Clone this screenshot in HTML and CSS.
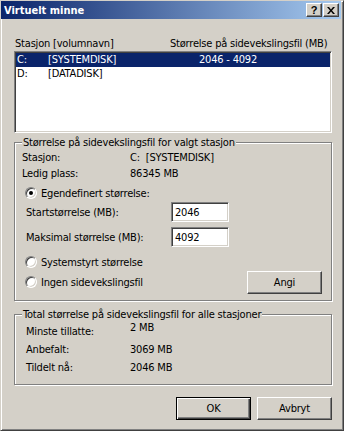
FILE: index.html
```html
<!DOCTYPE html>
<html lang="no">
<head>
  <meta charset="UTF-8" />
  <title>Virtuelt minne</title>
  <link rel="stylesheet" href="styles.css">
</head>
<body>
  <div class="vindu">
    <div class="tittellinje">
      <span class="tittel">Virtuelt minne</span>
      <div class="tittelknapper">
        <span class="tknapp hjelp">?</span>
        <span class="tknapp lukk">
          <svg width="8" height="7" viewBox="0 0 8 7"><path d="M0 0h2l2 2.5L6 0h2L5 3.5 8 7H6L4 4.5 2 7H0l3-3.5z" fill="#000"/></svg>
        </span>
      </div>
    </div>

    <div class="innhold">
      <div class="listehode">
        <span class="kol-stasjon">Stasjon [volumnavn]</span>
        <span>Størrelse på sidevekslingsfil (MB)</span>
      </div>
      <div class="liste">
        <div class="rad valgt"><span class="kol-bokstav">C:</span><span class="kol-navn">[SYSTEMDISK]</span><span>2046 - 4092</span></div>
        <div class="rad"><span class="kol-bokstav">D:</span><span class="kol-navn">[DATADISK]</span><span></span></div>
      </div>

      <div class="gruppe gruppe-valgt">
        <span class="gruppetittel">Størrelse på sidevekslingsfil for valgt stasjon</span>
        <div class="info"><span class="etikett">Stasjon:</span><span>C:&nbsp; [SYSTEMDISK]</span></div>
        <div class="info"><span class="etikett">Ledig plass:</span><span>86345 MB</span></div>
        <div class="radiovalg forste"><span class="radio valgt"></span><span>Egendefinert størrelse:</span></div>
        <div class="felt-rad"><span class="felt-etikett">Startstørrelse (MB):</span><span class="tekstfelt">2046</span></div>
        <div class="felt-rad andre"><span class="felt-etikett">Maksimal størrelse (MB):</span><span class="tekstfelt">4092</span></div>
        <div class="bunnvalg">
          <div class="radiokolonne">
            <div class="radiovalg"><span class="radio"></span><span>Systemstyrt størrelse</span></div>
            <div class="radiovalg"><span class="radio"></span><span>Ingen sidevekslingsfil</span></div>
          </div>
          <span class="knapp angi">Angi</span>
        </div>
      </div>

      <div class="gruppe gruppe-total">
        <span class="gruppetittel">Total størrelse på sidevekslingsfil for alle stasjoner</span>
        <div class="total"><span class="etikett">Minste tillatte:</span><span class="hevet">2 MB</span></div>
        <div class="total"><span class="etikett">Anbefalt:</span><span>3069 MB</span></div>
        <div class="total"><span class="etikett">Tildelt nå:</span><span>2046 MB</span></div>
      </div>

      <div class="knapperad">
        <span class="knapp standard">OK</span>
        <span class="knapp">Avbryt</span>
      </div>
    </div>
  </div>
</body>
</html>
```

FILE: styles.css
```css
* { box-sizing: border-box; }
body {
  margin: 0; background: #d4d0c8; white-space: nowrap;
  font-family: "DejaVu Sans Condensed", "DejaVu Sans", sans-serif; font-stretch: condensed;
  font-size: 11px; letter-spacing: -0.2px; color: #000;
}
.vindu {
  width: 344px; height: 431px; background: #d4d0c8;
  border: 1px solid; border-color: #d4d0c8 #404040 #404040 #d4d0c8;
  box-shadow: inset 1px 1px #fff, inset -1px -1px #808080;
  padding: 0 2px 0 0;
}
.tittellinje {
  height: 18px; display: flex; align-items: center; justify-content: space-between;
  background: linear-gradient(to right, #0a246a, #a6caf0);
  padding: 0 2px 0 3px;
}
.tittel { color: #fff; font-weight: bold; font-size: 11px; letter-spacing: 0; }
.tittelknapper { display: flex; gap: 1px; }
.tknapp {
  width: 16px; height: 14px; background: #d4d0c8;
  border: 1px solid; border-color: #fff #404040 #404040 #fff;
  box-shadow: inset -1px -1px #808080;
  display: flex; align-items: center; justify-content: center;
  font-family: "Liberation Sans", Arial, sans-serif;
  font-weight: bold; font-size: 11px; line-height: 1;
}
.innhold { padding: 18px 9px 0 13px; }
.listehode { display: flex; height: 13px; line-height: 13px; }
.kol-stasjon { width: 156px; padding-left: 1px; }
.liste {
  margin-top: 1px; height: 82px; background: #fff;
  border: 1px solid; border-color: #808080 #fff #fff #808080;
  box-shadow: inset 1px 1px #404040, inset -1px -1px #d4d0c8;
  padding: 1px;
}
.rad { display: flex; height: 14px; line-height: 14px; padding-left: 1px; }
.rad.valgt { background: #0a246a; color: #fff; }
.kol-bokstav { width: 31px; }
.kol-navn { width: 151px; }
.gruppe {
  position: relative; border: 1px solid #808080;
  box-shadow: inset 1px 1px #fff, 1px 1px #fff;
}
.gruppetittel {
  position: absolute; top: -7px; left: 7px; padding: 0 1px;
  background: #d4d0c8; line-height: 13px;
}
.gruppe-valgt { margin-top: 9px; height: 159px; padding: 7px 9px 0 7px; }
.info { display: flex; height: 16px; line-height: 16px; }
.etikett { width: 108px; }
.radiovalg { display: flex; align-items: center; height: 16px; gap: 4px; padding-left: 3px; }
.radiovalg.forste { margin-top: 3px; }
.radio {
  width: 12px; height: 12px; border-radius: 50%; background: #fff; position: relative;
  border: 1px solid; border-color: #808080 #fff #fff #808080;
  box-shadow: inset 1px 1px #404040, inset -1px -1px #d4d0c8;
}
.radio.valgt::after {
  content: ""; position: absolute; left: 3px; top: 3px;
  width: 4px; height: 4px; border-radius: 50%; background: #000;
}
.felt-rad { display: flex; align-items: center; height: 20px; margin-top: 1px; padding-left: 4px; }
.felt-rad.andre { margin-top: 5px; }
.felt-etikett { width: 145px; }
.tekstfelt {
  width: 58px; height: 20px; background: #fff; padding: 3px 3px 0;
  border: 1px solid; border-color: #808080 #fff #fff #808080;
  box-shadow: inset 1px 1px #404040, inset -1px -1px #d4d0c8;
}
.bunnvalg { display: flex; justify-content: space-between; height: 40px; margin-top: 7px; }
.radiokolonne { display: flex; flex-direction: column; gap: 4px; }
.knapp {
  width: 75px; height: 23px; background: #d4d0c8;
  border: 1px solid; border-color: #fff #404040 #404040 #fff;
  box-shadow: inset -1px -1px #808080;
  display: flex; align-items: center; justify-content: center;
}
.angi { align-self: flex-end; }
.knapp.standard {
  border-color: #000;
  box-shadow: inset 1px 1px #fff, inset -1px -1px #404040, inset -2px -2px #808080;
}
.gruppe-total { margin-top: 13px; height: 71px; padding: 8px 9px 0 11px; }
.total { display: flex; align-items: flex-start; height: 18px; line-height: 18px; }
.total .etikett { width: 104px; }
.hevet { margin-top: -4px; }
.knapperad { display: flex; justify-content: flex-end; gap: 6px; margin-top: 12px; }
```
